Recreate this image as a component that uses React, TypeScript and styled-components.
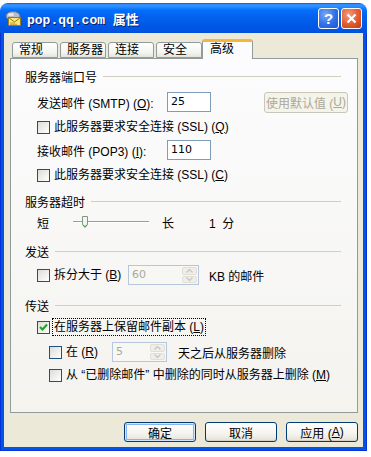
import React from 'react';
import styled, { createGlobalStyle } from 'styled-components';

const GlobalStyle = createGlobalStyle`
  body {
    margin: 0;
    background: #ffffff;
    font-family: 'Liberation Sans', 'Noto Sans CJK SC', sans-serif;
    font-size: 12px;
    color: #000;
  }
  u { text-decoration: underline; }
`;

const Window = styled.div`
  width: 367px;
  margin-top: 3px;
  display: flex;
  flex-direction: column;
`;

const TitleBar = styled.div`
  height: 30px;
  border-radius: 8px 8px 0 0;
  background: linear-gradient(
    #0058ee 0%,
    #3a93ff 6%,
    #288eff 12%,
    #127dff 18%,
    #036ffc 24%,
    #0262ee 45%,
    #0057e5 80%,
    #0054e3 92%,
    #0050d8 100%
  );
  display: flex;
  align-items: center;
  padding: 0 5px 0 5px;
  box-sizing: border-box;
`;

const Title = styled.span`
  margin-left: 5px;
  color: #fff;
  font-family: 'Liberation Mono', 'Noto Sans CJK SC', monospace;
  font-weight: bold;
  font-size: 13px;
  text-shadow: 1px 1px 0 #0a1e6e;
  flex: 1;
`;

const CapButton = styled.div<{ $close?: boolean }>`
  width: 21px;
  height: 21px;
  box-sizing: border-box;
  border: 1px solid #fff;
  border-radius: 3px;
  margin-left: 2px;
  display: flex;
  align-items: center;
  justify-content: center;
  color: #fff;
  font-weight: bold;
  font-size: 15px;
  font-family: 'Liberation Sans', sans-serif;
  background: ${(p) =>
    p.$close
      ? 'radial-gradient(circle at 35% 30%, #f39a7c, #e35a2e 55%, #c13a13)'
      : 'radial-gradient(circle at 35% 30%, #7aa8f8, #2f6fe8 55%, #1e56d4)'};
`;

const Frame = styled.div`
  background: #0055e5;
  border-left: 1px solid #0831d9;
  border-right: 1px solid #0831d9;
  border-bottom: 1px solid #0831d9;
  padding: 0 3px 3px 3px;
`;

const Dialog = styled.div`
  background: #ece9d8;
  padding: 6px 5px 5px 6px;
`;

const TabStrip = styled.div`
  display: flex;
  align-items: flex-end;
  height: 20px;
  padding-left: 2px;
  margin-bottom: -1px;
  position: relative;
  z-index: 1;
`;

const Tab = styled.div<{ $w: number; $active?: boolean; $ml: number }>`
  width: ${(p) => p.$w}px;
  height: ${(p) => (p.$active ? 20 : 16)}px;
  margin-bottom: ${(p) => (p.$active ? 0 : 1)}px;
  margin-left: ${(p) => p.$ml}px;
  box-sizing: border-box;
  border: 1px solid #919b9c;
  border-bottom: ${(p) => (p.$active ? 'none' : '1px solid #919b9c')};
  border-top: ${(p) => (p.$active ? '3px solid #f5b63a' : '1px solid #919b9c')};
  border-radius: 3px 3px 0 0;
  background: ${(p) =>
    p.$active ? '#fcfcfe' : 'linear-gradient(#ffffff, #f3f3ef 70%, #e6e4da)'};
  padding-left: ${(p) => (p.$active ? 7 : 6)}px;
  line-height: ${(p) => (p.$active ? 15 : 14)}px;
  white-space: nowrap;
`;

const Panel = styled.div`
  height: 355px;
  box-sizing: border-box;
  border: 1px solid #919b9c;
  background: linear-gradient(#fcfcfe, #f4f3ee);
  padding: 7px 9px 0 14px;
  display: flex;
  flex-direction: column;
`;

const Row = styled.div<{ $mt: number; $indent?: number }>`
  display: flex;
  align-items: center;
  height: 20px;
  margin-top: ${(p) => p.$mt}px;
  padding-left: ${(p) => p.$indent ?? 0}px;
  white-space: nowrap;
`;

const GroupLine = styled.div`
  flex: 1;
  height: 1px;
  background: #d0d0bf;
  margin: 0 7px 0 6px;
`;

const FieldLabel = styled.span<{ $w: number }>`
  width: ${(p) => p.$w}px;
`;

const TextBox = styled.div<{ $w: number }>`
  width: ${(p) => p.$w}px;
  height: 20px;
  box-sizing: border-box;
  border: 1px solid #7f9db9;
  background: #fff;
  padding-left: 3px;
  line-height: 18px;
  font-family: 'DejaVu Sans', sans-serif;
  font-size: 11px;
`;

const SideButton = styled.div`
  margin-left: auto;
  width: 84px;
  height: 21px;
  box-sizing: border-box;
  border: 1px solid #c9c7ba;
  border-radius: 3px;
  background: #f5f4ea;
  color: #aca899;
  display: flex;
  align-items: center;
  justify-content: center;
`;

const Box = styled.span`
  width: 13px;
  height: 13px;
  box-sizing: border-box;
  border: 1px solid #1c5180;
  background: linear-gradient(135deg, #dcdcd7, #ffffff);
  display: inline-flex;
  align-items: center;
  justify-content: center;
  flex-shrink: 0;
`;

const CheckText = styled.span<{ $focus?: boolean }>`
  margin-left: 3px;
  padding: 0 1px;
  outline: ${(p) => (p.$focus ? '1px dotted #000' : 'none')};
  line-height: 16px;
`;

const CheckWrap = styled.span<{ $w?: number }>`
  display: inline-flex;
  align-items: center;
  width: ${(p) => (p.$w ? `${p.$w}px` : 'auto')};
`;

const Gap = styled.span<{ $w: number }>`
  display: inline-block;
  width: ${(p) => p.$w}px;
`;

const Track = styled.div`
  width: 76px;
  height: 20px;
  position: relative;
  display: flex;
  align-items: center;
`;

const TrackLine = styled.div`
  width: 100%;
  height: 2px;
  border-top: 1px solid #9d9c99;
  border-bottom: 1px solid #fff;
  background: #e6e5de;
  box-sizing: border-box;
`;

const Thumb = styled.svg`
  position: absolute;
  left: 9px;
  top: 4px;
`;

const Spin = styled.div<{ $w: number }>`
  width: ${(p) => p.$w}px;
  height: 20px;
  box-sizing: border-box;
  border: 1px solid #b5c6de;
  background: #f7f7f3;
  display: flex;
  align-items: stretch;
  color: #aca899;
  font-family: 'DejaVu Sans', sans-serif;
  font-size: 11px;
`;

const SpinValue = styled.span`
  flex: 1;
  padding-left: 3px;
  line-height: 18px;
`;

const SpinButtons = styled.div`
  width: 15px;
  margin: 1px;
  display: flex;
  flex-direction: column;
  gap: 1px;
`;

const SpinHalf = styled.div`
  flex: 1;
  border-radius: 2px;
  background: #efeee8;
  border: 1px solid #e2e0d6;
  display: flex;
  align-items: center;
  justify-content: center;
`;

const ButtonRow = styled.div`
  display: flex;
  justify-content: flex-end;
  gap: 9px;
  margin-top: 9px;
`;

const PushButton = styled.div<{ $default?: boolean }>`
  width: 72px;
  height: 20px;
  box-sizing: border-box;
  border: 1px solid #003c74;
  border-radius: 3px;
  background: linear-gradient(#ffffff, #f4f3ee 60%, #e3e1d8);
  box-shadow: ${(p) =>
    p.$default ? 'inset 0 0 0 1px #cee7ff, inset 0 0 0 2px #8cb2ec' : 'inset 0 -1px 0 #d6d0c5'};
  display: flex;
  align-items: center;
  justify-content: center;
`;

const MailIcon = () => (
  <svg width="17" height="16" viewBox="0 0 17 16">
    <ellipse cx="8" cy="6" rx="7" ry="4.5" fill="#b8bcc4" stroke="#6d7280" strokeWidth="1" />
    <ellipse cx="6" cy="4.5" rx="3" ry="1.5" fill="#e6e8ee" />
    <rect x="3.5" y="7.5" width="12" height="8" fill="#fbe777" stroke="#9a7a1a" />
    <path d="M3.5 7.5 L9.5 12 L15.5 7.5" fill="none" stroke="#9a7a1a" />
    <path d="M5 13 h5 M5 14.3 h7" stroke="#c9a43a" />
  </svg>
);

const Check = () => (
  <svg width="9" height="9" viewBox="0 0 9 9">
    <path d="M1 4 L3.5 6.5 L8 1.5" fill="none" stroke="#21a121" strokeWidth="2" />
  </svg>
);

const Arrow = ({ up }: { up?: boolean }) => (
  <svg width="7" height="4" viewBox="0 0 7 4">
    <path
      d={up ? 'M0.5 3.5 L3.5 0.5 L6.5 3.5' : 'M0.5 0.5 L3.5 3.5 L6.5 0.5'}
      fill="none"
      stroke="#c8c6bb"
      strokeWidth="1.2"
    />
  </svg>
);

const CheckBox = ({
  children,
  checked,
  focus,
  width,
}: {
  children: React.ReactNode;
  checked?: boolean;
  focus?: boolean;
  width?: number;
}) => (
  <CheckWrap $w={width}>
    <Box>{checked && <Check />}</Box>
    <CheckText $focus={focus}>{children}</CheckText>
  </CheckWrap>
);

const SpinBox = ({ value, width }: { value: string; width: number }) => (
  <Spin $w={width}>
    <SpinValue>{value}</SpinValue>
    <SpinButtons>
      <SpinHalf>
        <Arrow up />
      </SpinHalf>
      <SpinHalf>
        <Arrow />
      </SpinHalf>
    </SpinButtons>
  </Spin>
);

const tabs = [
  { label: '常规', w: 46, ml: 0 },
  { label: '服务器', w: 46, ml: 2 },
  { label: '连接', w: 46, ml: 2 },
  { label: '安全', w: 46, ml: 2 },
];

export default function App() {
  return (
    <>
      <GlobalStyle />
      <Window>
        <TitleBar>
          <MailIcon />
          <Title>pop.qq.com 属性</Title>
          <CapButton>?</CapButton>
          <CapButton $close>
            <svg width="11" height="11" viewBox="0 0 11 11">
              <path d="M1.5 1.5 L9.5 9.5 M9.5 1.5 L1.5 9.5" stroke="#fff" strokeWidth="2.2" />
            </svg>
          </CapButton>
        </TitleBar>
        <Frame>
          <Dialog>
            <TabStrip>
              {tabs.map((t) => (
                <Tab key={t.label} $w={t.w} $ml={t.ml}>
                  {t.label}
                </Tab>
              ))}
              <Tab $w={51} $ml={0} $active>
                高级
              </Tab>
            </TabStrip>
            <Panel>
              <Row $mt={0}>
                <span>服务器端口号</span>
                <GroupLine />
              </Row>
              <Row $mt={6} $indent={12}>
                <FieldLabel $w={130}>
                  发送邮件 (SMTP) (<u>O</u>):
                </FieldLabel>
                <TextBox $w={44}>25</TextBox>
                <SideButton>
                  使用默认值 (<u>U</u>)
                </SideButton>
              </Row>
              <Row $mt={5} $indent={12}>
                <CheckBox>
                  此服务器要求安全连接 (SSL) (<u>Q</u>)
                </CheckBox>
              </Row>
              <Row $mt={3} $indent={12}>
                <FieldLabel $w={130}>
                  接收邮件 (POP3) (<u>I</u>):
                </FieldLabel>
                <TextBox $w={44}>110</TextBox>
              </Row>
              <Row $mt={5} $indent={12}>
                <CheckBox>
                  此服务器要求安全连接 (SSL) (<u>C</u>)
                </CheckBox>
              </Row>

              <Row $mt={6}>
                <span>服务器超时</span>
                <GroupLine />
              </Row>
              <Row $mt={1} $indent={12}>
                <FieldLabel $w={36}>短</FieldLabel>
                <Track>
                  <TrackLine />
                  <Thumb width="6" height="12" viewBox="0 0 6 12">
                    <path d="M0.5 0.5 H5.5 V8.5 L3 11.5 L0.5 8.5 Z" fill="#f4f3ee" stroke="#7c9a86" />
                    <path d="M1 8.6 L3 10.8 L5 8.6" fill="none" stroke="#21a121" />
                  </Thumb>
                </Track>
                <Gap $w={13} />
                <span>长</span>
                <Gap $w={35} />
                <span>1&nbsp;&nbsp;分</span>
              </Row>

              <Row $mt={9}>
                <span>发送</span>
                <GroupLine />
              </Row>
              <Row $mt={4} $indent={12}>
                <CheckBox width={91}>
                  拆分大于 (<u>B</u>)
                </CheckBox>
                <SpinBox value="60" width={71} />
                <Gap $w={10} />
                <span>KB 的邮件</span>
              </Row>

              <Row $mt={10}>
                <span>传送</span>
                <GroupLine />
              </Row>
              <Row $mt={2} $indent={12}>
                <CheckBox checked focus>
                  在服务器上保留邮件副本 (<u>L</u>)
                </CheckBox>
              </Row>
              <Row $mt={5} $indent={24}>
                <CheckBox width={63}>
                  在 (<u>R</u>)
                </CheckBox>
                <SpinBox value="5" width={55} />
                <Gap $w={11} />
                <span>天之后从服务器删除</span>
              </Row>
              <Row $mt={3} $indent={24}>
                <CheckBox>
                  从 “已删除邮件” 中删除的同时从服务器上删除 (<u>M</u>)
                </CheckBox>
              </Row>
            </Panel>
            <ButtonRow>
              <PushButton $default>确定</PushButton>
              <PushButton>取消</PushButton>
              <PushButton>
                应用 (<u>A</u>)
              </PushButton>
            </ButtonRow>
          </Dialog>
        </Frame>
      </Window>
    </>
  );
}
